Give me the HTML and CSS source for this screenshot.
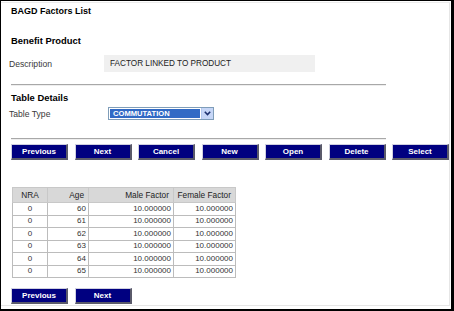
FILE: index.html
```html
<!DOCTYPE html>
<html lang="en">
<head>
  <meta charset="UTF-8" />
  <title>BAGD Factors List</title>
  <meta name="viewport" content="width=device-width, initial-scale=1.0" />
  <link rel="stylesheet" href="styles.css">
</head>
<body>
  <div class="frame">
    <div class="panel">
      <h1 class="page-title">BAGD Factors List</h1>

      <h2 class="section-title first">Benefit Product</h2>
      <div class="field-row desc-row">
        <label class="field-label">Description</label>
        <div class="readonly">FACTOR LINKED TO PRODUCT</div>
      </div>

      <hr class="divider">

      <h2 class="section-title">Table Details</h2>
      <div class="field-row type-row">
        <label class="field-label">Table Type</label>
        <div class="select">
          <span class="select-value">COMMUTATION</span>
          <span class="select-arrow">
            <svg width="7" height="5" viewBox="0 0 7 5"><path d="M0.8 0.8 L3.5 3.5 L6.2 0.8" fill="none" stroke="#1c2f6e" stroke-width="1.6"/></svg>
          </span>
        </div>
      </div>

      <hr class="divider second">

      <div class="btn-bar">
        <button class="nav-btn">Previous</button>
        <button class="nav-btn">Next</button>
        <button class="nav-btn">Cancel</button>
        <button class="nav-btn">New</button>
        <button class="nav-btn">Open</button>
        <button class="nav-btn">Delete</button>
        <button class="nav-btn">Select</button>
      </div>

      <table class="factors">
        <colgroup>
          <col class="col-nra">
          <col class="col-age">
          <col class="col-male">
          <col class="col-female">
        </colgroup>
        <thead>
          <tr>
            <th class="c">NRA</th>
            <th>Age</th>
            <th>Male Factor</th>
            <th>Female Factor</th>
          </tr>
        </thead>
        <tbody>
          <tr><td class="c">0</td><td>60</td><td>10.000000</td><td>10.000000</td></tr>
          <tr><td class="c">0</td><td>61</td><td>10.000000</td><td>10.000000</td></tr>
          <tr><td class="c">0</td><td>62</td><td>10.000000</td><td>10.000000</td></tr>
          <tr><td class="c">0</td><td>63</td><td>10.000000</td><td>10.000000</td></tr>
          <tr><td class="c">0</td><td>64</td><td>10.000000</td><td>10.000000</td></tr>
          <tr><td class="c">0</td><td>65</td><td>10.000000</td><td>10.000000</td></tr>
        </tbody>
      </table>

      <div class="btn-bar bottom">
        <button class="nav-btn">Previous</button>
        <button class="nav-btn">Next</button>
      </div>
    </div>
  </div>
</body>
</html>
```

FILE: styles.css
```css
html, body {
  margin: 0;
  padding: 0;
  background: #fff;
}
body {
  width: 454px;
  height: 311px;
  overflow: hidden;
  font-family: "Liberation Sans", Arial, sans-serif;
  color: #333;
}
.frame {
  box-sizing: border-box;
  width: 454px;
  height: 311px;
  border-top: 1px solid #000;
  border-left: 1px solid #000;
  border-right: 3px solid #000;
  border-bottom: 2px solid #000;
  padding-top: 1px;
}
.panel {
  box-sizing: border-box;
  width: 449px;
  height: 304px;
  border-top: 1px solid #ececec;
  border-right: 1px solid #e6e6e6;
  border-bottom: 1px solid #e6e6e6;
  padding: 2px 0 0 8px;
}
.page-title {
  margin: 0 0 0 2px;
  font-size: 9px;
  line-height: 12px;
  font-weight: bold;
  color: #000;
}
.section-title {
  margin: 6px 0 0 2px;
  font-size: 9.4px;
  line-height: 12px;
  font-weight: bold;
  color: #000;
}
.section-title.first {
  margin-top: 18px;
}
.field-row {
  display: flex;
  align-items: center;
}
.field-label {
  width: 95px;
  font-size: 8.6px;
  color: #3a3a3a;
}
.desc-row {
  margin-top: 8px;
  height: 17px;
}
.readonly {
  box-sizing: border-box;
  width: 211px;
  height: 17px;
  line-height: 17px;
  padding-left: 6px;
  background: #f0f0f0;
  font-size: 8.2px;
  color: #222;
}
.type-row {
  margin-top: 3px;
  height: 13px;
}
.type-row .field-label {
  width: 99px;
}
.select {
  box-sizing: border-box;
  display: flex;
  width: 106px;
  height: 13px;
  border: 1px solid #7f9db9;
  background: #fff;
}
.select-value {
  flex: 1;
  margin: 1px;
  padding-left: 3px;
  background: #316ac5;
  color: #fff;
  font-size: 7.6px;
  font-weight: bold;
  line-height: 9px;
}
.select-arrow {
  box-sizing: border-box;
  width: 12px;
  display: flex;
  align-items: center;
  justify-content: center;
  background: #c6d6f7;
  border-left: 1px solid #b4c8ee;
}
.divider {
  margin: 12px 0 0 2px;
  width: 375px;
  height: 0;
  border: 0;
  border-top: 1px solid #a8a8a8;
  border-bottom: 1px solid #eeeeee;
}
.divider.second {
  margin-top: 18px;
}
.btn-bar {
  display: flex;
  gap: 6.5px;
  margin: 4px 0 0 2px;
}
.btn-bar.bottom {
  margin-top: 10px;
}
.nav-btn {
  box-sizing: border-box;
  width: 57px;
  height: 16px;
  padding: 0;
  background: #000080;
  color: #fff;
  font-family: "Liberation Sans", Arial, sans-serif;
  font-size: 8px;
  font-weight: bold;
  border-top: 1px solid #d0d0e0;
  border-left: 1px solid #d0d0e0;
  border-right: 2px solid #5a5a6a;
  border-bottom: 2px solid #5a5a6a;
  cursor: pointer;
}
.factors {
  margin: 27px 0 0 3px;
  width: 223px;
  table-layout: fixed;
  border-collapse: collapse;
  border: 1px solid #b8b8b8;
  font-size: 8px;
  color: #333;
}
.col-nra { width: 35px; }
.col-age { width: 41px; }
.col-male { width: 85px; }
.col-female { width: 62px; }
.factors th {
  height: 14px;
  padding: 0 4px 0 0;
  background: #d8d8d8;
  font-weight: normal;
  font-size: 8.3px;
  text-align: right;
  color: #222;
  border: 1px solid #c8c8c8;
}
.factors td {
  box-sizing: border-box;
  height: 12.5px;
  padding: 0 2px;
  line-height: 10px;
  text-align: right;
  border: 1px solid #bcbcbc;
  background: #fff;
}
.factors .c {
  text-align: center;
  padding: 0;
}
```
